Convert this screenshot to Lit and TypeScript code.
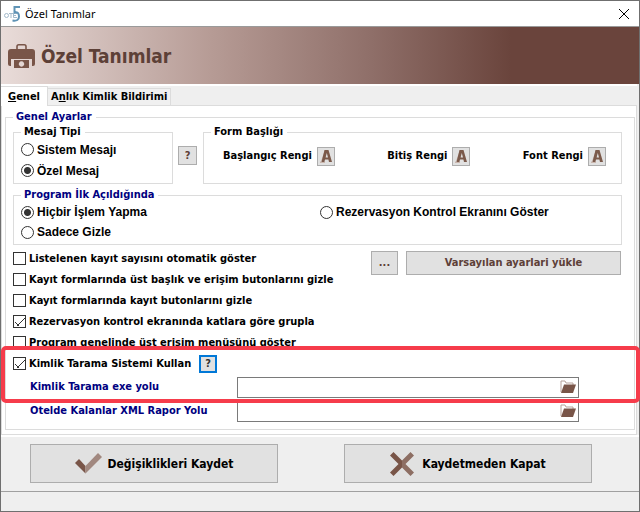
import { LitElement, html, css } from "lit";
import { customElement, state } from "lit/decorators.js";

const briefcase = html`<svg class="brief" viewBox="0 0 27 24" aria-hidden="true">
  <path fill="none" stroke="#795548" stroke-width="1.600" d="M9 6V2.500Q9 .8 10.700 .8h5.600q1.700 0 1.700 1.700V6"/>
  <path fill="#795548" d="M3 5h21q3 0 3 3v12q0 2-2 2h-1v-7H3v7H2q-2 0-2-2V8q0-3 3-3z"/>
  <path fill="#795548" fill-rule="evenodd" d="M6 16h15v8H6zM13.500 17.300a2.700 2.700 0 1 0 .01 0z"/>
</svg>`;

const folder = html`<svg class="folder" viewBox="0 0 16 14" aria-hidden="true">
  <path fill="none" stroke="#b5a19a" stroke-width="1" d="M1 12V1h4l1 2h7v2"/>
  <path fill="#795548" d="M4 4.500h12L13 13H1z"/>
</svg>`;

const tick = html`<svg class="tick" viewBox="0 0 27 21" aria-hidden="true">
  <path fill="#795548" d="M0 10l4-4 6.500 7v7.500z"/>
  <path fill="#a1887f" d="M10.500 13L23 0l4 4L10.500 20.500z"/>
</svg>`;

const cross = html`<svg class="cross" viewBox="0 0 24 24" aria-hidden="true">
  <path fill="#8d6e63" d="M20.500 0L24 3.500 15.500 12l8.500 8.500-3.500 3.500-8.500-8.500v-7z"/>
  <path fill="#795548" d="M3.500 0L12 8.500v7L3.500 24 0 20.500 8.500 12 0 3.500z"/>
</svg>`;

const colorLetter = html`<svg class="letter" viewBox="0 0 12 14" aria-hidden="true">
  <path fill="#c9b6ae" d="M0 12.500h5V14H0zM1 12L5 1h2L4 12z"/>
  <path fill="#7b5a4b" fill-rule="evenodd" d="M4.500 1h4L12 13H9l-.6-2.500H5L4.300 13H1.500zM5.600 8.500h2.400L6.800 4z"/>
</svg>`;

const colorFields = ["Başlangıç Rengi", "Bitiş Rengi", "Font Rengi"];

@customElement("app-root")
export class AppRoot extends LitElement {
  @state() private options = [
    { label: "Listelenen kayıt sayısını otomatik göster", on: false },
    { label: "Kayıt formlarında üst başlık ve erişim butonlarını gizle", on: false },
    { label: "Kayıt formlarında kayıt butonlarını gizle", on: false },
    { label: "Rezervasyon kontrol ekranında katlara göre grupla", on: true },
    { label: "Program genelinde üst erişim menüsünü göster", on: false },
  ];

  static styles = css`
    :host {
      display: block;
      font: bold 11px/14px "DejaVu Sans Condensed", "DejaVu Sans", sans-serif;
      color: #000;
    }
    * { box-sizing: border-box; }
    button, input { font: inherit; margin: 0; }
    svg { display: block; flex: none; }
    .window {
      display: flex;
      flex-direction: column;
      min-height: 100vh;
      border: 1px solid #6f6f6f;
      background: #efefef;
    }
    .titlebar {
      display: flex;
      align-items: center;
      gap: 5px;
      height: 26px;
      padding: 0 9px 0 3px;
      background: #fff;
      border-bottom: 1px solid #9a9a9a;
      font: 11px/16px "Noto Sans", sans-serif;
    }
    .app-icon { width: 16px; height: 16px; overflow: visible; }
    .caption { flex: 1; }
    .close { border: 0; padding: 0; background: none; }
    .close svg { width: 12px; height: 12px; }
    .banner {
      display: flex;
      align-items: center;
      gap: 6px;
      height: 57px;
      padding-left: 7px;
      background: linear-gradient(to right, #e9dcd9, #b69b95 33%, #8f6f69 58%, #6a443c 80%);
    }
    .brief { width: 27px; height: 24px; }
    h1 {
      margin: 0;
      font: bold 19px/26px "DejaVu Sans Condensed", "DejaVu Sans", sans-serif;
      color: #5d4037;
    }
    .tabs {
      display: flex;
      align-items: flex-end;
      height: 22px;
      border-top: 2px solid #fff;
      margin-right: 2px;
      box-shadow: inset 0 -1px #dcdcdc;
    }
    .tab {
      height: 18px;
      padding: 0 3px;
      border: 1px solid #dcdcdc;
      border-left: 0;
      background: #f0f0f0;
      white-space: nowrap;
      line-height: 16px;
      color: #000;
    }
    .tab.active {
      height: 20px;
      padding: 0 7px;
      border-bottom: 0;
      background: #fff;
    }
    .panel {
      padding: 4px 1px 4px 3px;
      margin-right: 2px;
      background: #fff;
      border: 1px solid #dcdcdc;
      border-top: 0;
    }
    fieldset {
      min-width: 0;
      margin: 0;
      border: 1px solid #dcdcdc;
      padding: 0 7px 2px;
    }
    legend { padding: 0 4px 0 3px; }
    .navy { color: #000080; }
    .general { padding: 1px 12px 6px 7px; }
    .row { display: flex; align-items: flex-start; }
    .message { width: 160px; }
    .radio, .check { display: flex; align-items: center; }
    .radio {
      gap: 3px;
      height: 21px;
      font: bold 12px/16px "Liberation Sans", Arial, sans-serif;
      white-space: nowrap;
    }
    .radio input, .check input {
      appearance: none;
      flex: none;
      width: 13px;
      height: 13px;
      border: 1px solid #333;
      background: #fff;
    }
    .radio input { border-radius: 50%; }
    .radio input:checked { background: radial-gradient(circle, #333 3px, #fff 4px); }
    .check { gap: 3px; height: 21px; white-space: nowrap; }
    .check input:checked {
      background: linear-gradient(45deg, transparent 47%, #333 47% 56%, transparent 56%) 1px 6px / 4px 4px no-repeat,
        linear-gradient(-45deg, transparent 45%, #333 45% 56%, transparent 56%) 3px 2px / 8px 8px no-repeat;
    }
    .btn {
      display: flex;
      align-items: center;
      justify-content: center;
      padding: 0;
      border: 1px solid #adadad;
      background: #e1e1e1;
      color: #5d4037;
    }
    .help { width: 19px; height: 19px; margin: 21px 6px 0 5px; }
    .help.focused {
      width: 18px;
      height: 18px;
      margin: 0 0 0 8px;
      border: 2px solid #0078d7;
      color: #333;
    }
    .colors { flex: 1; }
    .color-list {
      display: flex;
      justify-content: space-between;
      padding: 7px 8px 15px 12px;
    }
    .color { display: flex; align-items: center; gap: 5px; height: 20px; }
    .color .btn { width: 18px; height: 19px; }
    .letter { width: 12px; height: 14px; }
    .startup { margin-top: 4px; }
    .startup-grid {
      display: grid;
      grid-template-columns: 299px 1fr;
    }
    .startup .radio { height: 20px; }
    .options {
      display: grid;
      grid-template-columns: 1fr auto;
      padding-top: 3px;
    }
    .options .check { grid-column: 1; }
    .actions {
      grid-column: 2;
      grid-row: 1 / span 2;
      display: flex;
      gap: 8px;
      margin: 3px 1px 0 0;
    }
    .actions .btn { height: 24px; }
    .more { width: 27px; }
    .defaults { width: 215px; }
    .scan { position: relative; }
    .highlight {
      position: absolute;
      inset: -7px -18px -4px -12px;
      border: 4px solid #f63c4b;
      border-radius: 5px;
      pointer-events: none;
    }
    .scan-head { display: flex; align-items: center; height: 21px; margin-bottom: 1px; }
    .path {
      display: grid;
      grid-template-columns: 207px 1fr;
      align-items: center;
      height: 24px;
      padding: 0 43px 0 17px;
    }
    .field {
      display: flex;
      align-items: center;
      height: 21px;
      padding-right: 2px;
      border: 1px solid #7a7a7a;
      background: #fff;
    }
    .field input { flex: 1; min-width: 0; border: 0; padding: 0 4px; height: 17px; outline: 0; }
    .browse { border: 0; padding: 0; background: none; }
    .folder { width: 16px; height: 14px; }
    .footer {
      display: flex;
      gap: 66px;
      padding: 7px 47px 8px 29px;
      border-top: 2px solid #fff;
      border-bottom: 1px solid #a0a0a0;
    }
    .footer .btn {
      flex: 1;
      height: 39px;
      gap: 6px;
      color: #000;
      font-size: 12px;
      white-space: nowrap;
    }
    .footer .btn.cancel { gap: 8px; }
    .tick { width: 27px; height: 21px; }
    .cross { width: 24px; height: 24px; }
  `;

  render() {
    return html`
      <main class="window">
        <header class="titlebar">
          <svg class="app-icon" viewBox="0 0 16 16" aria-hidden="true">
            <g fill="none" stroke="#a3bacb">
              <circle cx="2.500" cy="9.500" r="2" />
              <path d="M5 7.500h4M7 7.500V12M13 7.500H9.500v4H13M9.500 9.500H12" />
            </g>
            <path fill="none" stroke="#5f93b5" stroke-width="2" d="M16 1H10.500V6.500Q15 5.500 15 10.500T8.500 14.500" />
          </svg>
          <span class="caption">Özel Tanımlar</span>
          <button class="close" aria-label="Kapat">
            <svg viewBox="0 0 12 12"><path stroke="#000" d="M1 1l10 10M11 1L1 11" /></svg>
          </button>
        </header>
        <div class="banner">${briefcase}<h1>Özel Tanımlar</h1></div>
        <nav class="tabs" role="tablist">
          <button class="tab active" role="tab" aria-selected="true"><u>G</u>enel</button>
          <button class="tab" role="tab" aria-selected="false">A<u>n</u>lık Kimlik Bildirimi</button>
        </nav>
        <section class="panel">
          <fieldset class="general">
            <legend class="navy">Genel Ayarlar</legend>
            <div class="row">
              <fieldset class="message">
                <legend>Mesaj Tipi</legend>
                <label class="radio"><input type="radio" name="message" />Sistem Mesajı</label>
                <label class="radio"><input type="radio" name="message" checked />Özel Mesaj</label>
              </fieldset>
              <button class="btn help">?</button>
              <fieldset class="colors">
                <legend>Form Başlığı</legend>
                <div class="color-list">
                  ${colorFields.map(
                    (name) => html`<div class="color">
                      <span>${name}</span><button class="btn" aria-label=${name}>${colorLetter}</button>
                    </div>`
                  )}
                </div>
              </fieldset>
            </div>
            <fieldset class="startup">
              <legend class="navy">Program İlk Açıldığında</legend>
              <div class="startup-grid">
                <label class="radio"><input type="radio" name="startup" checked />Hiçbir İşlem Yapma</label>
                <label class="radio"><input type="radio" name="startup" />Rezervasyon Kontrol Ekranını Göster</label>
                <label class="radio"><input type="radio" name="startup" />Sadece Gizle</label>
              </div>
            </fieldset>
            <div class="options">
              ${this.options.map(
                (o) => html`<label class="check"><input type="checkbox" .checked=${o.on} />${o.label}</label>`
              )}
              <div class="actions">
                <button class="btn more">...</button>
                <button class="btn defaults">Varsayılan ayarlari yükle</button>
              </div>
            </div>
            <div class="scan">
              <div class="scan-head">
                <label class="check"><input type="checkbox" checked />Kimlik Tarama Sistemi Kullan</label>
                <button class="btn help focused">?</button>
              </div>
              <div class="path">
                <label class="navy" for="exe">Kimlik Tarama exe yolu</label>
                <div class="field"><input id="exe" type="text" /><button class="browse" aria-label="Gözat">${folder}</button></div>
              </div>
              <div class="highlight"></div>
            </div>
            <div class="path">
              <label class="navy" for="xml">Otelde Kalanlar XML Rapor Yolu</label>
              <div class="field"><input id="xml" type="text" /><button class="browse" aria-label="Gözat">${folder}</button></div>
            </div>
          </fieldset>
        </section>
        <footer class="footer">
          <button class="btn">${tick}Değişiklikleri Kaydet</button>
          <button class="btn cancel">${cross}Kaydetmeden Kapat</button>
        </footer>
      </main>
    `;
  }
}
